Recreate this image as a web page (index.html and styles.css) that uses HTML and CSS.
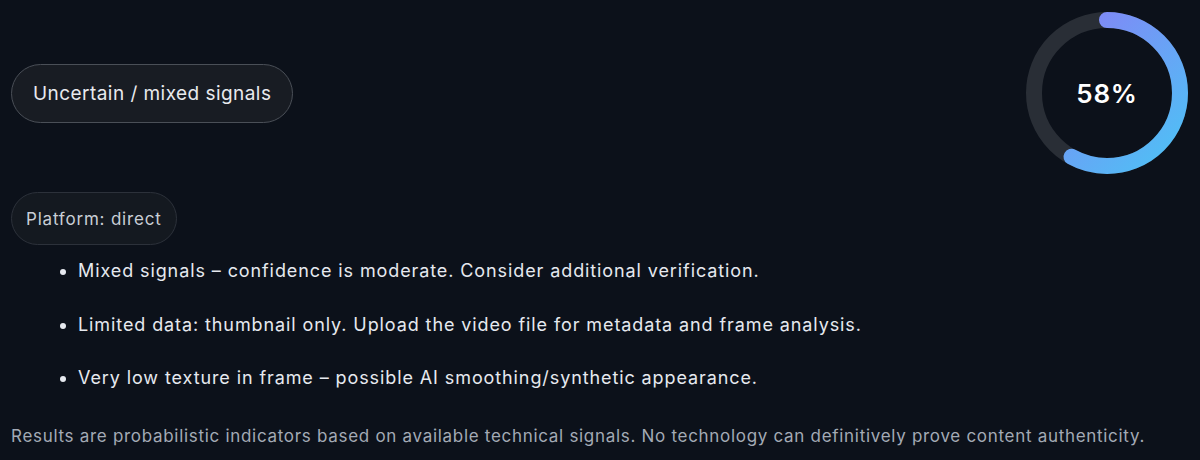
FILE: index.html
```html
<!DOCTYPE html>
<html>
<head>
<meta charset="utf-8">
<link rel="stylesheet" href="styles.css">
</head>
<body>
<div class="card">
  <div class="top">
    <div class="verdict">Uncertain / mixed signals</div>
    <div class="ring">
      <svg width="162" height="162" viewBox="0 0 162 162">
        <defs>
          <linearGradient id="g" x1="1" y1="0" x2="0" y2="1">
            <stop offset="0" stop-color="#8b7cf6"/>
            <stop offset="1" stop-color="#4cc3f5"/>
          </linearGradient>
        </defs>
        <circle cx="81" cy="81" r="73" fill="none" stroke="#292e36" stroke-width="16"/>
        <circle cx="81" cy="81" r="73" fill="none" stroke="url(#g)" stroke-width="16" stroke-linecap="round" stroke-dasharray="266.03 458.67" transform="rotate(-90 81 81)"/>
      </svg>
      <span class="pct">58%</span>
    </div>
  </div>
  <div class="platform">Platform: direct</div>
  <ul class="notes">
    <li>Mixed signals – confidence is moderate. Consider additional verification.</li>
    <li>Limited data: thumbnail only. Upload the video file for metadata and frame analysis.</li>
    <li>Very low texture in frame – possible AI smoothing/synthetic appearance.</li>
  </ul>
  <p class="disclaimer">Results are probabilistic indicators based on available technical signals. No technology can definitively prove content authenticity.</p>
</div>
</body>
</html>
```
FILE: styles.css
```css
html, body {
  margin: 0;
  padding: 0;
  background: #0c111a;
  font-family: Inter, "Noto Sans", sans-serif;
  color: #e6e9ef;
}
.card {
  padding: 12px 12px 0 11px;
}
.top {
  display: flex;
  justify-content: space-between;
  align-items: center;
}
.verdict {
  height: 59px;
  box-sizing: border-box;
  display: flex;
  align-items: center;
  padding: 0 21px;
  border: 1px solid #4a4f57;
  border-radius: 30px;
  background: #181c23;
  font-size: 19px;
  letter-spacing: 0.45px;
  color: #e8eaee;
}
.ring {
  position: relative;
  width: 162px;
  height: 162px;
}
.ring svg { display: block; }
.pct {
  position: absolute;
  inset: 0;
  display: flex;
  align-items: center;
  justify-content: center;
  font-size: 26px;
  font-weight: 600;
  letter-spacing: 0.8px;
  color: #ffffff;
}
.platform {
  display: inline-flex;
  align-items: center;
  height: 53px;
  box-sizing: border-box;
  margin-top: 18px;
  padding: 0 14px;
  border: 1px solid #2c313a;
  border-radius: 27px;
  background: #141920;
  font-size: 17px;
  letter-spacing: 0.8px;
  color: #c9ced6;
}
.notes {
  margin: 0;
  padding: 12px 0 0 67px;
  font-size: 18px;
  letter-spacing: 0.9px;
  color: #e6e9ef;
}
.notes li {
  line-height: 27px;
  margin-bottom: 26.5px;
}
.disclaimer {
  margin: 0;
  padding-top: 8px;
  font-size: 17px;
  letter-spacing: 0.7px;
  color: #a3aab5;
}
```
